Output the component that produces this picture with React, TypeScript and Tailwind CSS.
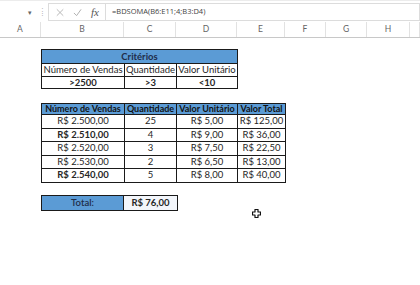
import React from "react";

const cols = [
  { l: "A", w: 41 },
  { l: "B", w: 83 },
  { l: "C", w: 52 },
  { l: "D", w: 61 },
  { l: "E", w: 48 },
  { l: "F", w: 41 },
  { l: "G", w: 41 },
  { l: "H", w: 43 },
  { l: "", w: 10 },
];

const rows = [
  ["R$ 2.500,00", "25", "R$ 5,00", "R$ 125,00", false],
  ["R$ 2.510,00", "4", "R$ 9,00", "R$ 36,00", true],
  ["R$ 2.520,00", "3", "R$ 7,50", "R$ 22,50", false],
  ["R$ 2.530,00", "2", "R$ 6,50", "R$ 13,00", false],
  ["R$ 2.540,00", "5", "R$ 8,00", "R$ 40,00", true],
] as const;

const td = "border border-[#1a1a1a] p-0 text-center whitespace-nowrap overflow-hidden leading-[10px]";

export default function App() {
  return (
    <div
      className="relative w-[420px] h-[285px] bg-white overflow-hidden text-[#262626]"
      style={{ fontFamily: "Lato, 'Open Sans', sans-serif" }}
    >
      {/* formula bar */}
      <div className="flex h-[22px] items-start pt-[2px] border-t border-[#ececec]">
        <div className="w-[37px] h-[18px] flex items-center justify-end pr-[5px] text-[7px] text-[#666]">▾</div>
        <div className="w-[11px] h-[18px] flex items-center justify-center text-[7px] text-[#aaa]">⁞</div>
        <div className="flex items-center gap-[9px] h-[18px] pl-[7px] pr-[6px] w-[57px] border border-[#dcdcdc] border-r-0">
          <svg width="9" height="9" viewBox="0 0 10 10" stroke="#b0b0b0" strokeWidth="1.1">
            <path d="M1 1 L9 9 M9 1 L1 9" />
          </svg>
          <svg width="10" height="9" viewBox="0 0 10 9" stroke="#b0b0b0" strokeWidth="1.1" fill="none">
            <path d="M1 5 L4 8 L9 1" />
          </svg>
          <span className="text-[11px] italic text-[#555]" style={{ fontFamily: "'Liberation Serif', serif" }}>
            fx
          </span>
        </div>
        <div className="flex-1 h-[18px] border border-[#dcdcdc] flex items-center pl-[6px] text-[7.5px] text-[#444]" style={{ fontFamily: "'Open Sans', sans-serif" }}>
          =BDSOMA(B6:E11;4;B3:D4)
        </div>
      </div>

      {/* column headers */}
      <div className="flex h-[16px] border-b border-[#c8c8c8] bg-white">
        {cols.map((c, i) => (
          <div
            key={i}
            style={{ width: c.w }}
            className="shrink-0 flex items-center justify-center text-[8.5px] text-[#666] border-r border-[#e2e2e2]"
          >
            {c.l}
          </div>
        ))}
      </div>

      {/* sheet body */}
      <div className="pl-[41px] pt-[11px] flex flex-col text-[9.5px]">
        <table className="border-collapse table-fixed w-[196px]">
          <colgroup>
            <col className="w-[83px]" />
            <col className="w-[52px]" />
            <col className="w-[61px]" />
          </colgroup>
          <tbody>
            <tr className="h-[14px] bg-[#5b9bd5]">
              <td colSpan={3} className={`${td} font-bold text-[#1f2d4a]`}>Critérios</td>
            </tr>
            <tr className="h-[13px]">
              <td className={td}>Número de Vendas</td>
              <td className={td}>Quantidade</td>
              <td className={td}>Valor Unitário</td>
            </tr>
            <tr className="h-[12px] font-bold">
              <td className={td}>&gt;2500</td>
              <td className={td}>&gt;3</td>
              <td className={td}>&lt;10</td>
            </tr>
          </tbody>
        </table>

        <table className="border-collapse table-fixed w-[244px] mt-[14px]">
          <colgroup>
            <col className="w-[83px]" />
            <col className="w-[52px]" />
            <col className="w-[61px]" />
            <col className="w-[48px]" />
          </colgroup>
          <tbody>
            <tr className="h-[11px] bg-[#5b9bd5] font-bold text-[#111] text-[9px]">
              <td className={td}>Número de Vendas</td>
              <td className={td}>Quantidade</td>
              <td className={td}>Valor Unitário</td>
              <td className={td}>Valor Total</td>
            </tr>
            {rows.map((r, i) => (
              <tr key={i} className="h-[13.5px]">
                <td className={`${td} ${r[4] ? "font-bold" : ""}`}>{r[0]}</td>
                <td className={td}>{r[1]}</td>
                <td className={td}>{r[2]}</td>
                <td className={td}>{r[3]}</td>
              </tr>
            ))}
          </tbody>
        </table>

        <table className="border-collapse table-fixed w-[136px] mt-[12px]">
          <colgroup>
            <col className="w-[82px]" />
            <col className="w-[54px]" />
          </colgroup>
          <tbody>
            <tr className="h-[15px]">
              <td className={`${td} bg-[#5b9bd5] text-[#1f2d4a] font-semibold`}>Total:</td>
              <td className={`${td} bg-[#f3f6fb] font-bold`}>R$ 76,00</td>
            </tr>
          </tbody>
        </table>
      </div>

      {/* cursor */}
      <svg className="absolute left-[252px] top-[209px]" width="9" height="9" viewBox="0 0 9 9">
        <path
          d="M3 0.5 H6 V3 H8.5 V6 H6 V8.5 H3 V6 H0.5 V3 H3 Z"
          fill="#fff"
          stroke="#111"
          strokeWidth="1.2"
          strokeLinejoin="round"
        />
      </svg>
    </div>
  );
}
